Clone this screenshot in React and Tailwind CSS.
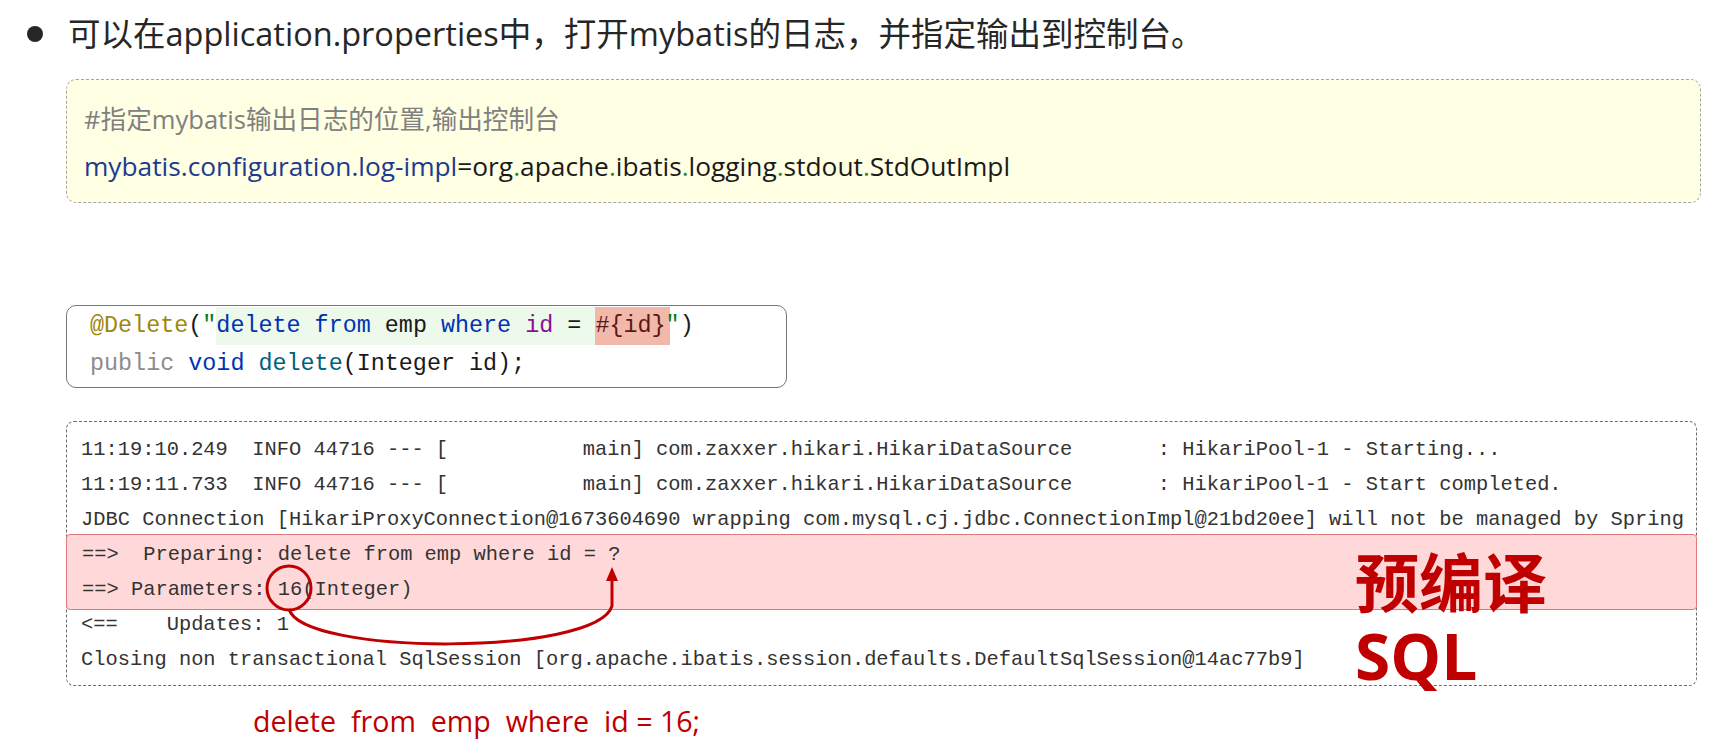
import React from "react";

const sans = "font-['Open_Sans','Noto_Sans_CJK_SC',sans-serif]";
const mono = "font-['Liberation_Mono','Courier_New',monospace]";

const logLines = [
  "11:19:10.249  INFO 44716 --- [           main] com.zaxxer.hikari.HikariDataSource       : HikariPool-1 - Starting...",
  "11:19:11.733  INFO 44716 --- [           main] com.zaxxer.hikari.HikariDataSource       : HikariPool-1 - Start completed.",
  "JDBC Connection [HikariProxyConnection@1673604690 wrapping com.mysql.cj.jdbc.ConnectionImpl@21bd20ee] will not be managed by Spring",
];

const tailLines = [
  "<==    Updates: 1",
  "Closing non transactional SqlSession [org.apache.ibatis.session.defaults.DefaultSqlSession@14ac77b9]",
];

function Dot() {
  return <span className="text-[#2e8b2e]">.</span>;
}

export default function App() {
  return (
    <div className={`w-[1713px] h-[747px] bg-white overflow-hidden ${sans}`}>
      {/* bullet line */}
      <div className="flex items-center h-[40px] mt-[14px] pl-[27px]">
        <div className="w-[16px] h-[16px] rounded-full bg-[#262626]" />
        <span className="ml-[25px] text-[32.5px] text-[#262626] leading-[40px]">
          可以在application.properties中，打开mybatis的日志，并指定输出到控制台。
        </span>
      </div>

      {/* properties box */}
      <div className="ml-[66px] mt-[25px] w-[1635px] h-[124px] rounded-[10px] border border-dashed border-[#a6a6a6] bg-[#ffffe3] pt-[17px] pl-[17px] text-[26.3px] leading-[46px]">
        <div className="text-[#808080] text-[25.6px]">#指定mybatis输出日志的位置,输出控制台</div>
        <div className="text-[#1a1a1a]">
          <span className="text-[#1d3a8f]">mybatis.configuration.log-impl</span>=org<Dot />apache<Dot />ibatis<Dot />logging<Dot />stdout<Dot />StdOutImpl
        </div>
      </div>

      {/* mapper code */}
      <div className={`ml-[66px] mt-[102px] w-[721px] h-[83px] rounded-[10px] border border-[#777] pt-px pl-[23px] text-[23.4px] leading-[38px] whitespace-pre ${mono}`}>
        <div className="flex h-[38px]">
          <span className="text-[#9e880d]">@Delete</span>
          <span className="text-[#1a1a1a]">(</span>
          <span className="text-[#067d17]">"</span>
          <span className="inline-block h-[38px] bg-[#edf9ea]">
            <span className="text-[#0033b3]">delete from</span>
            <span className="text-[#1a1a1a]"> emp </span>
            <span className="text-[#0033b3]">where</span>
            <span className="text-[#871094]"> id</span>
            <span className="text-[#1a1a1a]"> = </span>
            <span className="inline-block h-[38px] bg-[#f2b8aa] text-[#5a1a1a] pr-[4px]">#{"{"}id{"}"}</span>
          </span>
          <span className="text-[#067d17] -ml-[4px]">"</span>
          <span className="text-[#1a1a1a]">)</span>
        </div>
        <div className="h-[38px]">
          <span className="text-[#8c8c8c]">public </span>
          <span className="text-[#0033b3]">void </span>
          <span className="text-[#00627a]">delete</span>
          <span className="text-[#1a1a1a]">(Integer id);</span>
        </div>
      </div>

      {/* console log */}
      <div className={`relative ml-[66px] mt-[33px] w-[1631px] h-[265px] rounded-[8px] border border-dashed border-[#6b6b6b] pt-[9.5px] text-[20.4px] leading-[35px] text-[#333] whitespace-pre ${mono}`}>
        {logLines.map((l, i) => (
          <div key={i} className="pl-[14px]">{l}</div>
        ))}
        <div className="-mx-px -mt-[3px] -mb-[3px] py-[3px] pl-[15px] bg-[#ffd9d9] border border-[#e07a7a] rounded-[4px]">
          <div className="-mt-px">==&gt;  Preparing: delete from emp where id = ?</div>
          <div className="-mb-px">==&gt; Parameters: 16(Integer)</div>
        </div>
        {tailLines.map((l, i) => (
          <div key={i} className="pl-[14px]">{l}</div>
        ))}

        <svg className="absolute left-0 top-0 pointer-events-none" width="1631" height="265">
          <ellipse cx="222" cy="166" rx="22" ry="22" fill="none" stroke="#c00000" strokeWidth="3" />
          <path d="M 222 187 C 235 234, 530 234, 545 184 L 545 158" fill="none" stroke="#c00000" strokeWidth="3" />
          <polygon points="539,159 551,159 545,145" fill="#c00000" />
        </svg>

        <div className={`absolute left-[1288px] top-[124px] text-[64px] leading-[73px] font-bold text-[#c00000] ${sans}`}>
          <div>预编译</div>
          <div>SQL</div>
        </div>
      </div>

      <div className="ml-[253px] mt-[15px] text-[28.6px] leading-[40px] text-[#c00000] whitespace-pre">
        delete  from  emp  where  id = 16;
      </div>
    </div>
  );
}
